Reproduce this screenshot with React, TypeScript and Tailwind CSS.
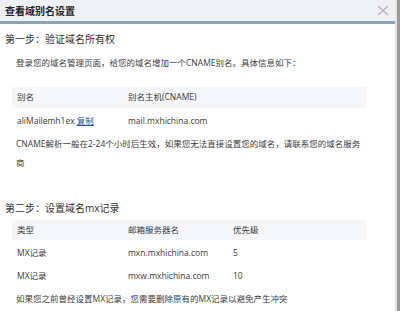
import React from "react";

const font = {
  fontFamily: '"Open Sans", "Noto Sans CJK SC", sans-serif',
};

export default function App() {
  return (
    <div className="w-[400px] h-[311px] overflow-hidden bg-white flex" style={font}>
      <div className="flex-1 flex flex-col">
        <div className="h-[21px] shrink-0 bg-[#eef0f3] flex items-center justify-between pl-[5px] pr-[6px]">
          <span className="text-[10px] font-bold text-[#222] leading-none" style={{ fontFamily: '"Noto Sans CJK SC", sans-serif' }}>
            查看域别名设置
          </span>
          <svg width="12" height="11" viewBox="0 0 12 11" className="text-[#b4b4b4]">
            <path d="M1 1 L11 10 M11 1 L1 10" stroke="currentColor" strokeWidth="1.4" fill="none" />
          </svg>
        </div>
        <div className="h-[3px] shrink-0 bg-[#8ea2b5]" />
        <div className="flex-1 flex flex-col text-[#3a3a3a] text-[8.5px]">
          <div className="pl-[5px] pt-[3px] h-[27px] shrink-0 flex items-center text-[10px] text-[#333]">
            第一步：验证域名所有权
          </div>
          <div className="pl-[16px] h-[24px] shrink-0 flex items-center">
            登录您的域名管理页面，给您的域名增加一个CNAME别名。具体信息如下：
          </div>
          <div className="h-[12px] shrink-0" />
          <div className="ml-[12px] w-[355px] shrink-0">
            <div className="h-[21px] bg-[#f5f6f8] grid grid-cols-[111px_1fr] items-center pl-[5px]">
              <span>别名</span>
              <span>别名主机(CNAME)</span>
            </div>
            <div className="h-[26px] grid grid-cols-[111px_1fr] items-center pl-[5px]">
              <span>
                aliMailemh1ex <span className="text-[#1d4f91] underline">复制</span>
              </span>
              <span>mail.mxhichina.com</span>
            </div>
          </div>
          <div className="pl-[16px] pr-[30px] leading-[19px] shrink-0">
            CNAME解析一般在2-24个小时后生效，如果您无法直接设置您的域名，请联系您的域名服务商
          </div>
          <div className="h-[26px] shrink-0" />
          <div className="pl-[5px] h-[20px] shrink-0 flex items-center text-[10px] text-[#333]">
            第二步：设置域名mx记录
          </div>
          <div className="h-[2px] shrink-0" />
          <div className="ml-[12px] w-[355px] shrink-0">
            <div className="h-[20px] bg-[#f5f6f8] grid grid-cols-[111px_105px_1fr] items-center pl-[5px]">
              <span>类型</span>
              <span>邮箱服务器名</span>
              <span>优先级</span>
            </div>
            <div className="h-[23px] grid grid-cols-[111px_105px_1fr] items-center pl-[5px] pt-[3px]">
              <span>MX记录</span>
              <span>mxn.mxhichina.com</span>
              <span>5</span>
            </div>
            <div className="h-[23px] grid grid-cols-[111px_105px_1fr] items-center pl-[5px] pt-[3px]">
              <span>MX记录</span>
              <span>mxw.mxhichina.com</span>
              <span>10</span>
            </div>
          </div>
          <div className="pl-[16px] h-[23px] shrink-0 flex items-center pt-[3px]">
            如果您之前曾经设置MX记录，您需要删除原有的MX记录以避免产生冲突
          </div>
        </div>
      </div>
      <div className="w-[2px] bg-[#e4e4e4]" />
      <div className="w-[3px] bg-[#9a9a9a]" />
    </div>
  );
}
